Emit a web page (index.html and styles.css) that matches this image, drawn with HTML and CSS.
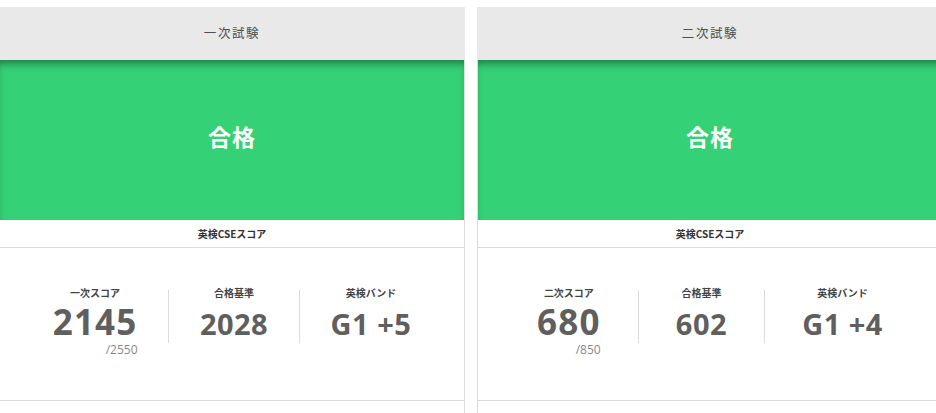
FILE: index.html
```
<!DOCTYPE html>
<html lang="ja">
<head>
  <meta charset="UTF-8">
  <meta name="viewport" content="width=device-width, initial-scale=1.0">
  <title>試験結果</title>
  <link rel="stylesheet" href="styles.css">
</head>
<body>
  <div class="results">
    <section class="card">
      <div class="card-head">一次試験</div>
      <div class="verdict">合格</div>
      <div class="cse-title">英検CSEスコア</div>
      <div class="stats">
        <div class="stat">
          <div class="stat-label">一次スコア</div>
          <div class="value-wrap">
            <div class="stat-value big">2145</div>
            <div class="stat-max">/2550</div>
          </div>
        </div>
        <div class="divider"></div>
        <div class="stat">
          <div class="stat-label">合格基準</div>
          <div class="stat-value">2028</div>
        </div>
        <div class="divider"></div>
        <div class="stat">
          <div class="stat-label">英検バンド</div>
          <div class="stat-value">G1 +5</div>
        </div>
      </div>
      <div class="card-foot"></div>
    </section>

    <section class="card">
      <div class="card-head">二次試験</div>
      <div class="verdict">合格</div>
      <div class="cse-title">英検CSEスコア</div>
      <div class="stats">
        <div class="stat">
          <div class="stat-label">二次スコア</div>
          <div class="value-wrap">
            <div class="stat-value big">680</div>
            <div class="stat-max">/850</div>
          </div>
        </div>
        <div class="divider"></div>
        <div class="stat">
          <div class="stat-label">合格基準</div>
          <div class="stat-value">602</div>
        </div>
        <div class="divider"></div>
        <div class="stat">
          <div class="stat-label">英検バンド</div>
          <div class="stat-value">G1 +4</div>
        </div>
      </div>
      <div class="card-foot"></div>
    </section>
  </div>
</body>
</html>
```

FILE: styles.css
```
html, body {
  margin: 0;
  padding: 0;
  overflow: hidden;
}

body {
  font-family: "Noto Sans CJK JP", "Noto Sans", sans-serif;
  background: #fff;
  padding-top: 7px;
}

.results {
  display: flex;
  gap: 12px;
  margin-left: -1px;
  width: 960px;
}

.card {
  width: 466px;
  flex: none;
  box-sizing: border-box;
  border-left: 1px solid #dcdcdc;
  border-right: 1px solid #dcdcdc;
  background: #fff;
}

.card-head {
  height: 53px;
  line-height: 51px;
  margin: 0 -1px;
  background: #e9e9e9;
  color: #4f4f4f;
  font-size: 12.5px;
  letter-spacing: 1.6px;
  text-align: center;
}

.verdict {
  height: 160px;
  display: flex;
  align-items: center;
  justify-content: center;
  padding-bottom: 8px;
  box-sizing: border-box;
  background: #35d176;
  box-shadow: inset 0 7px 9px -4px rgba(0, 0, 0, 0.45);
  color: #fff;
  font-size: 23px;
  font-weight: 700;
  letter-spacing: 1px;
}

.cse-title {
  height: 27px;
  line-height: 27px;
  border-bottom: 1px solid #dcdcdc;
  text-align: center;
  color: #333;
  font-size: 10px;
  font-weight: 700;
}

.stats {
  display: flex;
  height: 153px;
  box-sizing: border-box;
  padding: 38px 22px 0;
  border-bottom: 1px solid #dcdcdc;
}

.stat {
  flex: 1 1 auto;
  text-align: center;
}

.divider {
  flex: none;
  width: 1px;
  height: 53px;
  margin-top: 4px;
  background: #dcdcdc;
}

.stat-label {
  line-height: 14px;
  font-size: 10px;
  font-weight: 700;
  color: #444;
}

.value-wrap {
  display: inline-block;
}

.stat-value {
  margin-top: 2px;
  font-family: "Open Sans", "Liberation Sans", sans-serif;
  font-weight: 700;
  font-size: 29px;
  line-height: 44px;
  letter-spacing: 0.5px;
  color: #5f5f5f;
}

.stat-value.big {
  font-size: 35px;
  line-height: 40px;
  letter-spacing: 1.2px;
}

.stat-max {
  margin-top: 1px;
  text-align: right;
  font-family: "Open Sans", "Liberation Sans", sans-serif;
  font-size: 12px;
  line-height: 14px;
  color: #888;
}

.card-foot {
  height: 40px;
}
```
